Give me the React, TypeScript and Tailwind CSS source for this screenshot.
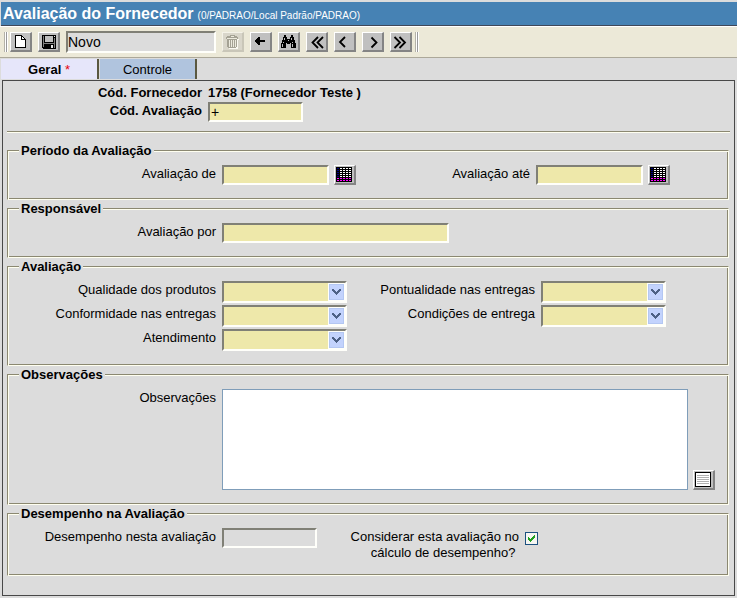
import { useState } from "react";
import type { ReactNode } from "react";

const FIELD =
  "block border-2 border-t-[#808076] border-l-[#808076] border-r-[#fffffa] border-b-[#fffffa] bg-[#eee8aa] px-px text-sm leading-4 outline-none";

const BUTTON =
  "flex h-5 w-[22px] shrink-0 items-start justify-start pt-px pl-px border-t border-l border-r-2 border-b-2 border-t-white border-l-white border-r-[#848484] border-b-[#848484] bg-[#c0c0c0]";

function ToolButton({ label, disabled, children }: { label: string; disabled?: boolean; children: ReactNode }) {
  return (
    <button
      type="button"
      aria-label={label}
      disabled={disabled}
      className={
        disabled
          ? "flex h-5 w-[22px] shrink-0 items-start justify-start border-t border-l border-r-2 border-b-2 border-t-[#f4f2e8] border-l-[#f4f2e8] border-r-[#c9c6b8] border-b-[#c9c6b8] bg-[#d9d6ca] pt-px pl-px"
          : BUTTON
      }
    >
      {children}
    </button>
  );
}

function Icon({ children }: { children: ReactNode }) {
  return (
    <svg width="16" height="16" viewBox="0 0 16 16" shapeRendering="crispEdges" className="shrink-0" aria-hidden="true">
      {children}
    </svg>
  );
}

function NewIcon() {
  return (
    <Icon>
      <path d="M3 1h7v1h1v1h1v1h1v1h1v9H3z" fill="#000" />
      <path d="M4 2h5v4h4v7H4z" fill="#fff" />
      <path d="M10 3h1v1h1v1h-2z" fill="#fff" />
    </Icon>
  );
}

function SaveIcon() {
  return (
    <Icon>
      <path d="M2 1h14v14H3v-1H2z" fill="#000" />
      <path d="M5 2h8v6H5z" fill="#c0c0c0" />
      <path d="M3 2h1v11H3zM14 4h1v10h-1zM4 9h10v1H4z" fill="#808080" />
      <path d="M14 2h1v1h-1zM11 11h2v3h-2z" fill="#e8e8e8" />
    </Icon>
  );
}

function TrashIcon() {
  return (
    <Icon>
      <path d="M3 5h12v1h-1v9H5V6H3zM7 2h5v1H7z" fill="#fbfaf2" />
      <path d="M6 1h5v1h2v1h1v2H2V3h1V2h3zM3 5h10v8h-1v1H4v-1H3z" fill="#a5a294" />
      <path d="M7 2h3v1H7zM3 4h10v1H3zM5 6h1v7H5zM7 6h1v7H7zM9 6h1v7H9zM11 6h1v7h-1z" fill="#eceadd" />
    </Icon>
  );
}

function BackIcon() {
  return (
    <Icon>
      <path d="M6 3h2v3h5v2H8v3H6v-1H5V9H4V8H3V6h1V5h1V4h1z" fill="#000" />
    </Icon>
  );
}

function FindIcon() {
  return (
    <Icon>
      <path
        d="M4 1h2v2h1v2h3V3h1V1h2v2h1v3h1v3h1v5h-5V9h-1v1H7V9H6v5H1V9h1V6h1V3h1z"
        fill="#000"
      />
      <path d="M4 4h1v2H4zM11 4h1v2h-1zM3 8h1v1H3zM2 10h1v3H2zM12 8h1v1h-1zM12 10h1v3h-1zM8 6h1v1H8z" fill="#c0c0c0" />
    </Icon>
  );
}

function Chevrons({ points }: { points: string[] }) {
  return (
    <svg width="16" height="16" viewBox="0 0 16 16" className="shrink-0" aria-hidden="true">
      {points.map((p) => (
        <polyline key={p} points={p} fill="none" stroke="#000" strokeWidth="1.8" />
      ))}
    </svg>
  );
}

function CalendarIcon() {
  const columns = [0, 1, 2, 3, 4];
  const rows = [0, 1, 2, 3, 4, 5, 6];
  return (
    <Icon>
      <rect width="16" height="15" fill="#000" />
      {rows.map((r) =>
        columns.map((c) => (
          <rect
            key={`${r}-${c}`}
            x={1 + c * 3}
            y={1 + r * 2}
            width="2"
            height="1"
            fill={r > 4 ? "#ff00ff" : c === 0 ? "#000080" : "#fff"}
          />
        )),
      )}
    </Icon>
  );
}

function NoteIcon() {
  return (
    <Icon>
      <path d="M0 0h16v15H0z" fill="#000" />
      <path d="M1 1h14v13H1z" fill="#fff" />
      <path d="M2 3h12v1H2zM2 5h12v1H2zM2 7h12v1H2zM2 9h12v1H2zM2 11h12v1H2z" fill="#b0b0b0" />
    </Icon>
  );
}

function Grip() {
  return (
    <div className="flex h-5 shrink-0">
      <span className="w-px bg-[#b4b2a8]" />
      <span className="w-px bg-white" />
      <span className="w-px bg-[#9a9a9a]" />
      <span className="w-px bg-white" />
    </div>
  );
}

function Group({ title, children }: { title: string; children: ReactNode }) {
  return (
    <fieldset className="min-w-0 border border-t-[#8b8871] border-r-[#fffff0] border-b-[#fffff0] border-l-[#8b8871] pt-[7px] pb-3.5 shadow-[inset_1px_1px_#fffff0,inset_-1px_-1px_#8b8871]">
      <legend className="ml-[11px] bg-[#dcdcdc] px-0.5 pt-0.5 font-bold leading-3.5">{title}</legend>
      {children}
    </fieldset>
  );
}

function Label({ htmlFor, className, children }: { htmlFor: string; className: string; children: ReactNode }) {
  return (
    <label htmlFor={htmlFor} className={`shrink-0 pt-px text-right leading-4 ${className}`}>
      {children}
    </label>
  );
}

function DateField({ id, label, labelWidth }: { id: string; label: string; labelWidth: string }) {
  return (
    <div className="flex items-start">
      <Label htmlFor={id} className={labelWidth}>
        {label}
      </Label>
      <input id={id} type="text" className={`ml-1.5 h-5 w-[107px] ${FIELD}`} />
      <button type="button" aria-label={`Calendário: ${label}`} className={`ml-[5px] ${BUTTON}`}>
        <CalendarIcon />
      </button>
    </div>
  );
}

function SelectField({ id, label, labelWidth }: { id: string; label: string; labelWidth: string }) {
  return (
    <div className="flex items-start">
      <Label htmlFor={id} className={labelWidth}>
        {label}
      </Label>
      <div className="relative ml-1.5">
        <select id={id} className={`h-[22px] w-[125px] appearance-none ${FIELD}`}>
          <option value="" />
        </select>
        <svg
          width="17"
          height="18"
          viewBox="0 0 17 18"
          shapeRendering="crispEdges"
          className="pointer-events-none absolute top-0.5 right-0.5"
          aria-hidden="true"
        >
          <rect width="17" height="18" fill="#fffffa" />
          <rect x="1" y="1" width="15" height="16" fill="#b4c7f2" />
          <rect x="2" y="2" width="13" height="14" fill="#c3d3fd" />
          <path d="M4 6h2v1h1v1h1v1h1V8h1V7h1V6h2v2h-1v1h-1v1h-1v1H9v1H8v-1H7v-1H6V9H5V8H4z" fill="#4d6185" />
        </svg>
      </div>
    </div>
  );
}

export default function App() {
  const [consider, setConsider] = useState(true);
  const [code, setCode] = useState("+");
  const [status, setStatus] = useState("Novo");

  return (
    <div className="min-h-screen bg-[#dcdcdc] pb-0.5 font-['Liberation_Sans',Arial,sans-serif] text-[13px] leading-4 text-black">
      <header className="pt-0.5 pl-px">
        <div className="flex h-6 items-center gap-1 border-b border-[#404858] bg-[#4682b4] pl-0.5 text-white">
          <h1 className="text-base font-bold">Avaliação do Fornecedor</h1>
          <span className="pt-1 text-[10px]">(0/PADRAO/Local Padrão/PADRAO)</span>
        </div>
      </header>

      <div className="flex h-8 items-center border-t border-b border-t-white border-b-[#aca899] bg-[#ece9d8] pl-1">
        <Grip />
        <div className="flex items-center gap-1.5 pr-[3px] pl-0.5">
          <ToolButton label="Novo">
            <NewIcon />
          </ToolButton>
          <ToolButton label="Salvar">
            <SaveIcon />
          </ToolButton>
          <input
            type="text"
            aria-label="Situação"
            value={status}
            onChange={(e) => setStatus(e.target.value)}
            className="h-[22px] w-[150px] border-2 border-t-[#808076] border-r-[#fffffa] border-b-[#fffffa] border-l-[#808076] bg-[#dcdcdc] text-sm outline-none"
          />
          <ToolButton label="Excluir" disabled>
            <TrashIcon />
          </ToolButton>
          <ToolButton label="Voltar">
            <BackIcon />
          </ToolButton>
          <ToolButton label="Localizar">
            <FindIcon />
          </ToolButton>
          <ToolButton label="Primeiro">
            <Chevrons points={["10,3 4.5,8.5 10,14", "15,3 9.5,8.5 15,14"]} />
          </ToolButton>
          <ToolButton label="Anterior">
            <Chevrons points={["9,3 4,8 9,13"]} />
          </ToolButton>
          <ToolButton label="Próximo">
            <Chevrons points={["7.5,3.5 12.5,8.5 7.5,13.5"]} />
          </ToolButton>
          <ToolButton label="Último">
            <Chevrons points={["2.5,3 8,8.5 2.5,14", "7.5,3 13,8.5 7.5,14"]} />
          </ToolButton>
        </div>
        <Grip />
      </div>

      <nav className="flex gap-px pt-px pl-px" role="tablist">
        <button
          type="button"
          role="tab"
          aria-selected="true"
          className="h-5 w-[98px] border-r-2 border-[#5a5840] bg-[#e6e6fa] pt-px font-bold"
        >
          Geral <span className="font-normal text-red-600">*</span>
        </button>
        <button
          type="button"
          role="tab"
          aria-selected="false"
          className="h-5 w-[97px] border-r-2 border-[#5a5840] bg-[#b0c4de] pt-px"
        >
          Controle
        </button>
      </nav>

      <main className="mx-0.5 mt-px border border-[#484848] px-1 pt-1 pb-[19px]">
        <div className="flex flex-col gap-px px-0.5 font-bold">
          <div className="flex gap-1.5">
            <span className="w-[193px] shrink-0 text-right">Cód. Fornecedor</span>
            <span>1758 (Fornecedor Teste )</span>
          </div>
          <div className="flex gap-1.5">
            <Label htmlFor="codigo" className="w-[193px]">
              Cód. Avaliação
            </Label>
            <input
              id="codigo"
              type="text"
              value={code}
              onChange={(e) => setCode(e.target.value)}
              className={`h-5 w-[95px] font-normal ${FIELD}`}
            />
          </div>
        </div>

        <hr className="mt-[9px] mb-[9px] h-0.5 border-t border-b border-t-[#8b8871] border-b-[#fffff0]" />

        <div className="flex flex-col pr-px">
          <Group title="Período da Avaliação">
            <div className="flex">
              <DateField id="avaliacao-de" label="Avaliação de" labelWidth="w-[208px]" />
              <DateField id="avaliacao-ate" label="Avaliação até" labelWidth="w-[174px]" />
            </div>
          </Group>

          <Group title="Responsável">
            <div className="flex items-start">
              <Label htmlFor="avaliacao-por" className="w-[208px]">
                Avaliação por
              </Label>
              <input id="avaliacao-por" type="text" className={`ml-1.5 h-5 w-[227px] ${FIELD}`} />
            </div>
          </Group>

          <Group title="Avaliação">
            <div className="flex">
              <div className="flex flex-col gap-0.5">
                <SelectField id="qualidade" label="Qualidade dos produtos" labelWidth="w-[208px]" />
                <SelectField id="conformidade" label="Conformidade nas entregas" labelWidth="w-[208px]" />
                <SelectField id="atendimento" label="Atendimento" labelWidth="w-[208px]" />
              </div>
              <div className="flex flex-col gap-0.5">
                <SelectField id="pontualidade" label="Pontualidade nas entregas" labelWidth="w-[188px]" />
                <SelectField id="condicoes" label="Condições de entrega" labelWidth="w-[188px]" />
              </div>
            </div>
          </Group>

          <Group title="Observações">
            <div className="flex items-start pr-[13px]">
              <Label htmlFor="observacoes" className="w-[208px]">
                Observações
              </Label>
              <textarea
                id="observacoes"
                className="mr-[5px] ml-1.5 block h-[101px] min-w-0 flex-1 resize-none border border-[#7f9db9] bg-white p-0.5 outline-none"
              />
              <button type="button" aria-label="Ampliar observações" className={`self-end ${BUTTON}`}>
                <NoteIcon />
              </button>
            </div>
          </Group>

          <Group title="Desempenho na Avaliação">
            <div className="flex items-start">
              <Label htmlFor="desempenho" className="w-[208px]">
                Desempenho nesta avaliação
              </Label>
              <input
                id="desempenho"
                type="text"
                readOnly
                className="ml-1.5 h-5 w-[95px] border-2 border-t-[#808076] border-r-[#fffffa] border-b-[#fffffa] border-l-[#808076] bg-[#dcdcdc] outline-none"
              />
              <Label htmlFor="considerar" className="w-[202px]">
                Considerar esta avaliação no
                <br />
                cálculo de desempenho?{"\u00a0"}
              </Label>
              <span className="relative mt-1 ml-1.5">
                <input
                  id="considerar"
                  type="checkbox"
                  checked={consider}
                  onChange={(e) => setConsider(e.target.checked)}
                  className="block size-[13px] appearance-none border border-[#1c5180] bg-[#f6f6f2]"
                />
                {consider && (
                  <svg
                    width="13"
                    height="13"
                    viewBox="0 0 13 13"
                    shapeRendering="crispEdges"
                    className="pointer-events-none absolute inset-0"
                    aria-hidden="true"
                  >
                    <path d="M3 5h1v1h1v1h1V6h1V5h1V4h1V3h1v3H9v1H8v1H7v1H6v1H5V9H4V8H3z" fill="#21a121" />
                  </svg>
                )}
              </span>
            </div>
          </Group>
        </div>
      </main>
    </div>
  );
}
